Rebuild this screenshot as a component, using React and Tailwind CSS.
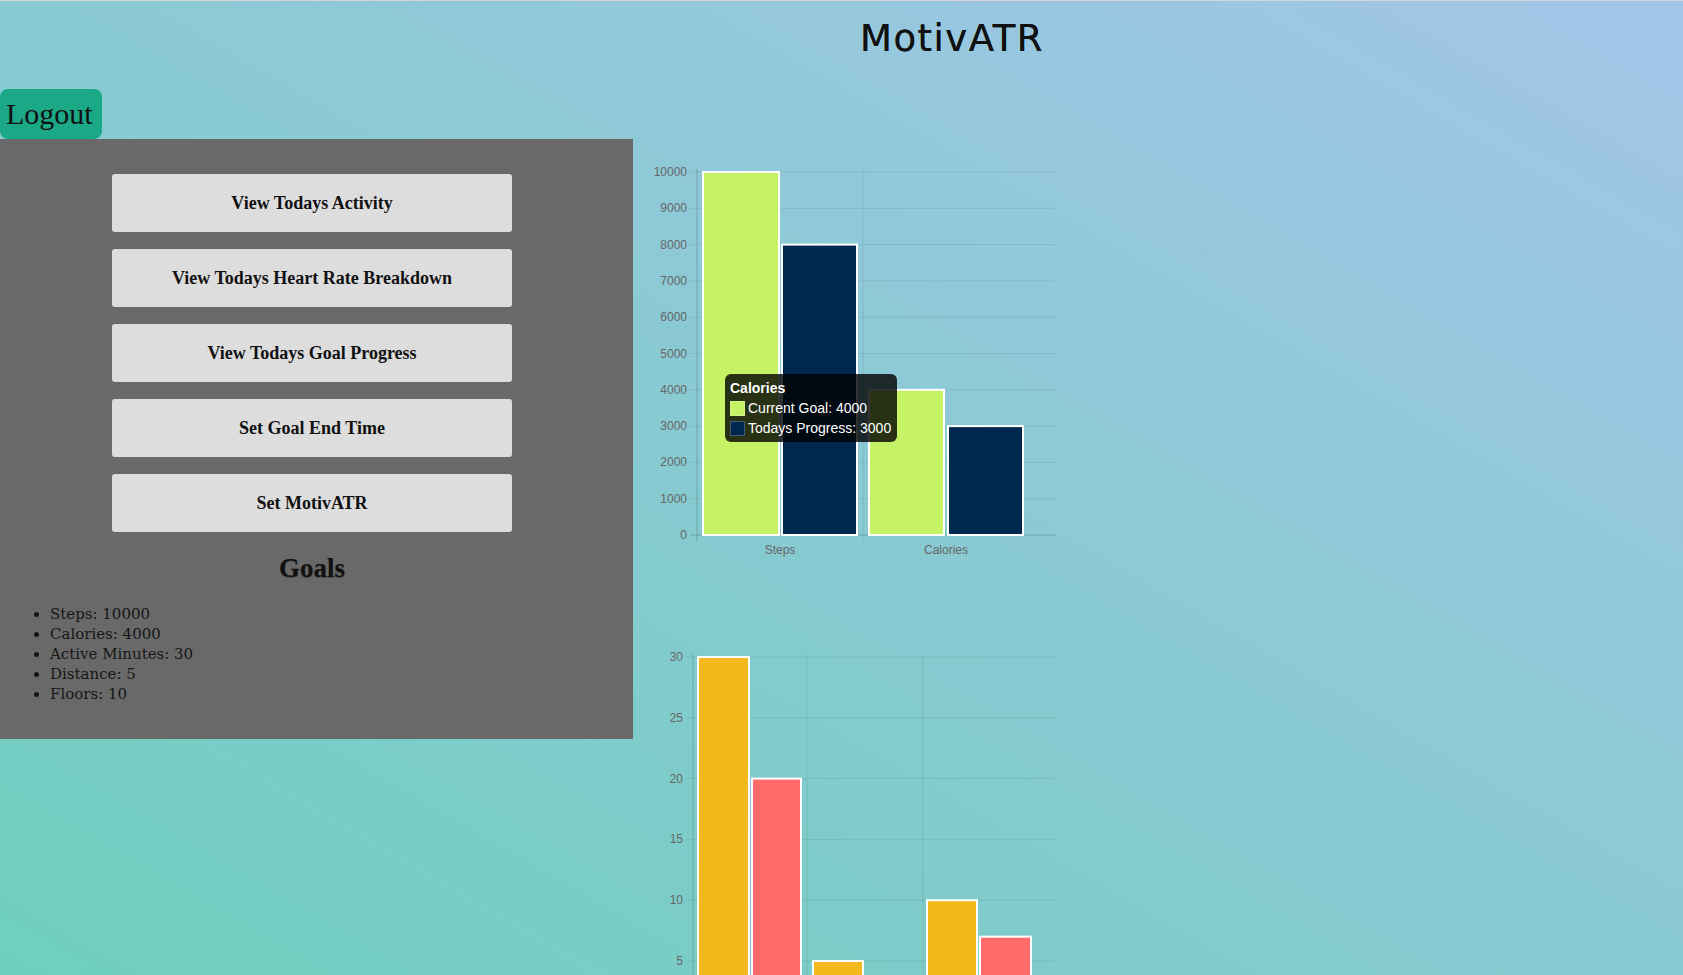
import React from 'react';

const GREEN = '#c6f265';
const NAVY = '#00284f';
const YELLOW = '#f1b91c';
const RED = '#ff6b6b';

const MENU = [
  'View Todays Activity',
  'View Todays Heart Rate Breakdown',
  'View Todays Goal Progress',
  'Set Goal End Time',
  'Set MotivATR',
];

const GOALS = [
  'Steps: 10000',
  'Calories: 4000',
  'Active Minutes: 30',
  'Distance: 5',
  'Floors: 10',
];

const GOAL_CHART = {
  width: 420,
  height: 424,
  axisX: 57,
  labelX: 47,
  top: 33,
  zero: 396,
  max: 10000,
  step: 1000,
  right: 415,
  vlines: [223],
  bars: [
    { x: 63, w: 76, v: 10000, c: GREEN },
    { x: 142, w: 75, v: 8000, c: NAVY },
    { x: 229, w: 75, v: 4000, c: GREEN },
    { x: 308, w: 75, v: 3000, c: NAVY },
  ],
  xLabels: [
    { x: 140, t: 'Steps' },
    { x: 306, t: 'Calories' },
  ],
};

const MINUTES_CHART = {
  width: 420,
  height: 380,
  axisX: 53,
  labelX: 43,
  top: 57,
  zero: 421.8,
  max: 30,
  step: 5,
  right: 415,
  vlines: [167, 283],
  bars: [
    { x: 58, w: 51, v: 30, c: YELLOW },
    { x: 112, w: 49, v: 20, c: RED },
    { x: 173, w: 50, v: 5, c: YELLOW },
    { x: 226, w: 51, v: 2, c: RED },
    { x: 287, w: 50, v: 10, c: YELLOW },
    { x: 340, w: 51, v: 7, c: RED },
  ],
  xLabels: [],
};

function BarChart({ cfg }) {
  const y = (v) => cfg.zero - (v / cfg.max) * (cfg.zero - cfg.top);
  const ticks = [];
  for (let v = 0; v <= cfg.max; v += cfg.step) ticks.push(v);
  // labels below the visible area are left out
  const shown = ticks.filter((v) => y(v) + 6 < cfg.height);

  return (
    <svg width={cfg.width} height={cfg.height} className="block">
      {ticks.map((v) => (
        <line
          key={'h' + v}
          x1={cfg.axisX - 7}
          x2={cfg.right}
          y1={y(v)}
          y2={y(v)}
          stroke={v === 0 ? 'rgba(0,0,0,0.18)' : 'rgba(0,0,0,0.08)'}
          strokeWidth="1"
        />
      ))}
      {cfg.vlines.map((x) => (
        <line key={'v' + x} x1={x} x2={x} y1={cfg.top - 3} y2={cfg.zero + 7} stroke="rgba(0,0,0,0.08)" />
      ))}
      <line x1={cfg.axisX} x2={cfg.axisX} y1={cfg.top - 3} y2={cfg.zero + 7} stroke="rgba(0,0,0,0.18)" />
      {shown.map((v) => (
        <text
          key={'t' + v}
          x={cfg.labelX}
          y={y(v) + 4}
          textAnchor="end"
          fontFamily="'Liberation Sans', Arial, sans-serif"
          fontSize="12"
          fill="#666"
        >
          {v}
        </text>
      ))}
      {cfg.bars.map((b, i) => (
        <rect
          key={'b' + i}
          x={b.x}
          y={y(b.v)}
          width={b.w}
          height={cfg.zero - y(b.v)}
          fill={b.c}
          stroke="#fff"
          strokeWidth="2"
        />
      ))}
      {cfg.xLabels.map((l) => (
        <text
          key={l.t}
          x={l.x}
          y={cfg.zero + 19}
          textAnchor="middle"
          fontFamily="'Liberation Sans', Arial, sans-serif"
          fontSize="12"
          fill="#666"
        >
          {l.t}
        </text>
      ))}
    </svg>
  );
}

function Tooltip() {
  return (
    <div className="absolute left-[85px] top-[235px] w-[172px] h-[68px] rounded-[6px] bg-black/80 px-[5px] pt-[6px] font-['Liberation_Sans',Arial,sans-serif] text-white whitespace-nowrap">
      <div className="text-[14px] font-bold leading-[16px]">Calories</div>
      <div className="mt-[2px] flex h-[20px] items-center gap-[3px] text-[14px]">
        <span className="h-[15px] w-[15px] shrink-0 border border-white/20 bg-[#c6f265]" />
        <span>Current Goal: 4000</span>
      </div>
      <div className="flex h-[20px] items-center gap-[3px] text-[14px]">
        <span className="h-[15px] w-[15px] shrink-0 border border-white/25 bg-[#00284f]" />
        <span>Todays Progress: 3000</span>
      </div>
    </div>
  );
}

export default function App() {
  return (
    <div className="h-[975px] w-full overflow-hidden border-t border-[#d4d4d4] bg-[linear-gradient(to_top_right,#6fcfbe,#a3c5e8)]">
      <header className="flex h-[88px] justify-center pl-[221px] pt-[16px]">
        <h1 className="font-['DejaVu_Sans',sans-serif] text-[37px] leading-[44px] tracking-[1.5px] text-[#111] [text-shadow:0_0_0.4px_#111]">
          MotivATR
        </h1>
      </header>

      <button className="block h-[50px] w-[102px] rounded-[8px] bg-[#1aa886] pl-[6px] text-left font-['Liberation_Serif',serif] text-[30px] leading-[48px] text-[#111]">
        Logout
      </button>

      <div className="flex items-start">
        <aside className="flex h-[600px] w-[633px] shrink-0 flex-col bg-[#696969] pt-[35px]">
          <nav className="ml-[112px] flex w-[400px] flex-col gap-[17px]">
            {MENU.map((label) => (
              <button
                key={label}
                className="h-[58px] w-full rounded-[3px] bg-[#dddddd] font-['Liberation_Serif',serif] text-[18px] font-bold text-[#111]"
              >
                {label}
              </button>
            ))}
          </nav>

          <h2 className="mt-[21px] pr-[9px] text-center font-['Liberation_Serif',serif] text-[27px] font-semibold leading-[31px] text-[#111] [text-shadow:0_1px_1px_rgba(0,0,0,0.3)]">
            Goals
          </h2>

          <ul className="mt-[20px] list-disc pl-[50px] font-['DejaVu_Serif',serif] text-[15px] leading-[20px] text-[#161616]">
            {GOALS.map((g) => (
              <li key={g}>{g}</li>
            ))}
          </ul>
        </aside>

        <main className="ml-[7px] flex flex-col">
          <div className="relative">
            <BarChart cfg={GOAL_CHART} />
            <Tooltip />
          </div>
          <div className="mt-[37px]">
            <BarChart cfg={MINUTES_CHART} />
          </div>
        </main>
      </div>
    </div>
  );
}
